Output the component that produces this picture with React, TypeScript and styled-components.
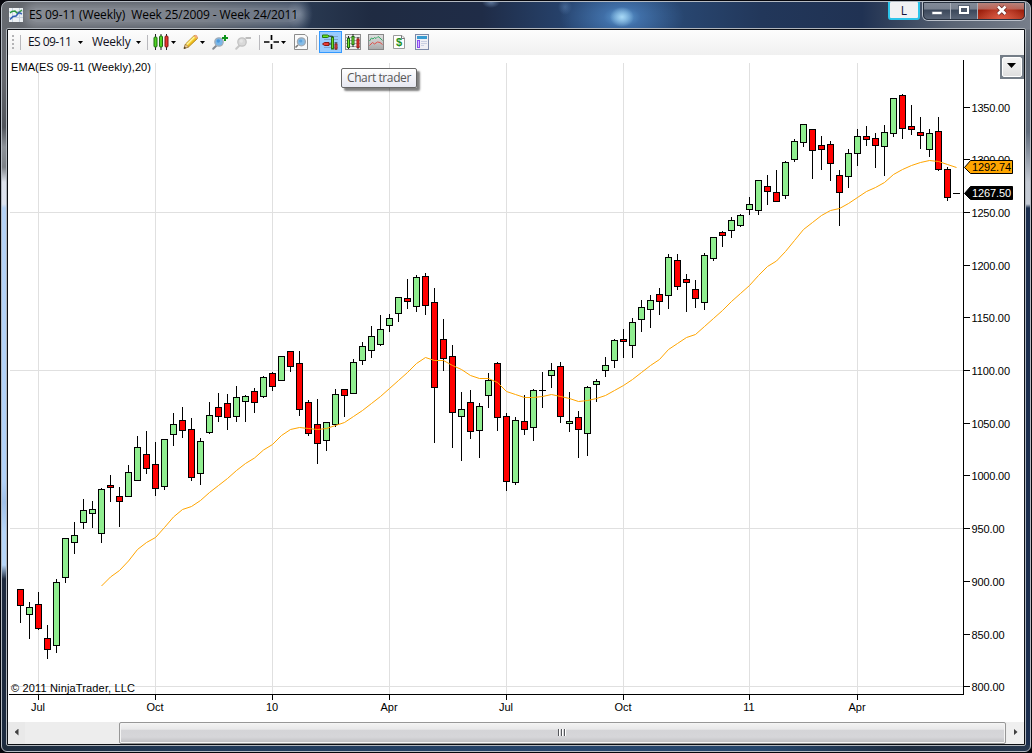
import React from "react";
import styled, { createGlobalStyle } from "styled-components";

const Global = createGlobalStyle`
  * { box-sizing: border-box; }
  body { margin: 0; background: #05070d; overflow: hidden; }
`;

const uiFont = `"Open Sans", "Noto Sans", sans-serif`;
const chartFont = `"Liberation Sans", Arial, sans-serif`;

const Desktop = styled.div`
  width: 1032px;
  height: 753px;
  padding: 1px;
  background: #05060c;
`;

const WindowFrame = styled.div`
  width: 1030px;
  height: 751px;
  border: 1px solid #b4bac2;
  border-radius: 7px 7px 6px 6px;
  display: flex;
  flex-direction: column;
  overflow: hidden;
  background:
    radial-gradient(ellipse 12px 10px at 620px 15px, rgba(175, 222, 248, 0.9) 0%, rgba(120, 180, 230, 0) 100%) no-repeat 0 0 / 100% 27px,
    radial-gradient(ellipse 62px 34px at 620px 15px, rgba(100, 165, 220, 0.95) 0%, rgba(74, 128, 190, 0.7) 30%, rgba(50, 90, 145, 0) 100%) no-repeat 0 0 / 100% 27px,
    radial-gradient(ellipse 13px 18px at 298px 12px, rgba(140, 155, 175, 0.5), rgba(90, 105, 130, 0)) no-repeat 0 0 / 100% 27px,
    radial-gradient(ellipse 9px 6px at 489px 0px, rgba(120, 150, 190, 0.7), rgba(60, 90, 130, 0)) no-repeat 0 0 / 100% 27px,
    radial-gradient(ellipse 7px 8px at 563px 5px, rgba(110, 150, 200, 0.4), rgba(60, 90, 130, 0)) no-repeat 0 0 / 100% 27px,
    linear-gradient(90deg, #666a70 0, #5c6067 60px, #4b525c 200px, #2a3a52 300px, #1f2b42 370px, #1f2c47 480px, #27446f 570px, #284670 680px, #22375a 760px, #203253 860px, #39475f 900px, #5a6474 950px, #777e8a 1028px) no-repeat 0 0 / 100% 27px,
    linear-gradient(180deg, #686c73 0, #64676d 80px, #50545b 125px, #8d9299 145px, #7d8288 165px, #dde2ec 180px, #dce3f0 202px, #b4d2f6 206px, #b2d2f8 480px, #9fc0e9 500px, #b6d6f9 530px, #b6d6f9 563px, #1d2a3e 577px, #1d2b40 100%) no-repeat 0 0 / 5px 743px,
    linear-gradient(180deg, #7d828b 0, #5c6673 60px, #5f6b7b 130px, #c3c9d3 180px, #c5ccd6 202px, #1b2e4e 206px, #1b2e4e 100%) no-repeat 100% 0 / 6px 743px,
    linear-gradient(90deg, #1d2a3a, #203856 18%, #26456c 55%, #25466c 74%, #1d2b3e 88%, #26374e);
`;

const TitleBar = styled.header`
  height: 26px;
  flex: none;
  display: flex;
  align-items: flex-start;
  padding-left: 7px;
`;

const TitleIcon = styled.svg`
  margin: 6px 6px 0 0;
  flex: none;
`;

const Title = styled.div`
  flex: 1;
  height: 26px;
  font: 12px/26px ${uiFont};
  letter-spacing: -0.09px;
  white-space: pre;
  color: #000;
  & > span {
    display: inline-block;
    line-height: 14px;
    border-radius: 8px;
    background: rgba(190, 196, 204, 0.42);
    box-shadow: 0 0 8px 5px rgba(190, 196, 204, 0.42);
  }
`;

const LanguageButton = styled.div`
  width: 32px;
  height: 20px;
  margin: -2px 2px 0 0;
  border: 2px solid #2cc4ea;
  border-radius: 3px;
  background: #f1f1f3;
  font: 12px/17px ${uiFont};
  color: #16163c;
  text-align: center;
`;

const Controls = styled.div`
  display: flex;
  height: 20px;
  margin: -1px 4px 0 0;
  border: 1px solid #b9bfc9;
  border-top: 0;
  border-radius: 0 0 6px 6px;
  overflow: hidden;
  outline: 1px solid #262f3d;
  outline-offset: -2px;
`;

const Control = styled.div<{ $w: number; $close?: boolean }>`
  width: ${(p) => p.$w}px;
  display: flex;
  justify-content: center;
  align-items: flex-start;
  padding-top: 1px;
  border-right: ${(p) => (p.$close ? "0" : "1px solid #aab0bb")};
  background: ${(p) =>
    p.$close
      ? "radial-gradient(ellipse at 50% 100%, #e0604a 0, rgba(200,50,30,0) 70%), linear-gradient(#b98c86 0, #b1645a 42%, #9c1e0c 48%, #b43a22 100%)"
      : "linear-gradient(#858d9b 0, #79818f 42%, #3c485b 48%, #5d687a 100%)"};
`;

const Client = styled.main`
  width: 1020px;
  height: 718px;
  flex: none;
  margin-left: 4px;
  border: 1px solid #b0b5bb;
  border-radius: 2px;
  padding: 1px;
  background: #0b0e13;
`;

const Surface = styled.div`
  position: relative;
  width: 1016px;
  height: 714px;
  display: flex;
  flex-direction: column;
  background: #fff;
`;

const Toolbar = styled.nav`
  height: 25px;
  flex: none;
  display: flex;
  align-items: flex-start;
  background: linear-gradient(#fdfdfd, #f0f0f0);
`;

const Grip = styled.div`
  width: 2px;
  height: 15px;
  margin: 5px 0 0 4px;
  background: repeating-linear-gradient(#b4b4b6 0 2px, transparent 2px 4px);
`;

const Separator = styled.div<{ $gap: number }>`
  width: 1px;
  height: 15px;
  margin: 5px 0 0 ${(p) => p.$gap}px;
  background: #b9b9bd;
`;

const Label = styled.div<{ $gap: number; $w: number; $track: number }>`
  width: ${(p) => p.$w}px;
  margin-left: ${(p) => p.$gap}px;
  font: 12px/24px ${uiFont};
  letter-spacing: ${(p) => p.$track}px;
  white-space: nowrap;
  color: #10101c;
`;

const Caret = styled.i<{ $gap: number }>`
  width: 5px;
  height: 3px;
  margin: 11px 0 0 ${(p) => p.$gap}px;
  background: #000;
  clip-path: polygon(0 0, 100% 0, 50% 100%);
`;

const IconSlot = styled.div<{ $gap: number; $active?: boolean }>`
  flex: none;
  width: ${(p) => (p.$active ? 23 : 16)}px;
  height: ${(p) => (p.$active ? 22 : 16)}px;
  margin: ${(p) => (p.$active ? 1 : 4)}px 0 0 ${(p) => p.$gap}px;
  padding: ${(p) => (p.$active ? "2px 0 0 2px" : "0")};
  border: ${(p) => (p.$active ? "1px solid #3399ff" : "0")};
  background: ${(p) => (p.$active ? "#99ccff" : "none")};
  svg { display: block; overflow: visible; }
`;

const ChartSvg = styled.svg`
  display: block;
  flex: none;
  font: 11px ${chartFont};
`;

const MenuButton = styled.div`
  position: absolute;
  top: 25px;
  right: 0;
  width: 24px;
  height: 24px;
  padding: 2px;
  background: #747d87;
  & > div {
    width: 20px;
    height: 20px;
    border: 1px solid #fff;
    border-radius: 2px;
    background: linear-gradient(#f4f4f4, #ebebeb 50%, #dedede);
    padding: 5px 0 0 4px;
  }
  i {
    display: block;
    width: 9px;
    height: 5px;
    background: #000;
    clip-path: polygon(0 0, 100% 0, 50% 100%);
  }
`;

const Tooltip = styled.div`
  position: absolute;
  left: 333px;
  top: 38px;
  width: 76px;
  height: 20px;
  border: 1px solid #676767;
  border-radius: 2px;
  background: linear-gradient(#fff, #e6e7f1);
  box-shadow: 3px 3px 2px rgba(0, 0, 0, 0.5);
  font: 12px/18px ${uiFont};
  letter-spacing: -0.4px;
  padding-left: 5px;
  white-space: nowrap;
  color: #575757;
`;

const ScrollBar = styled.div`
  height: 22px;
  flex: none;
  display: flex;
  background: #ededed;
`;

const ScrollArrow = styled.div<{ $right?: boolean }>`
  width: 17px;
  height: 22px;
  display: flex;
  align-items: center;
  justify-content: center;
  background: ${(p) => (p.$right ? "#efefef" : "#e9e9e9")};
  i {
    width: 4px;
    height: 7px;
    margin-top: -2px;
    background: #404040;
    clip-path: ${(p) => (p.$right ? "polygon(0 0, 100% 50%, 0 100%)" : "polygon(100% 0, 0 50%, 100% 100%)")};
  }
`;

const Thumb = styled.div`
  width: 887px;
  height: 22px;
  margin: 0 1px 0 94px;
  border: 1px solid #979797;
  border-radius: 2px;
  box-shadow: inset 0 0 0 1px #f4f4f4;
  background: linear-gradient(#f3f3f3 0, #e8e8e9 32%, #d4d4d7 34%, #d6d6d9 70%, #bebec1 100%);
  display: flex;
  justify-content: center;
  gap: 1px;
  padding: 6px 2px 0 0;
  i {
    width: 2px;
    height: 7px;
    background: linear-gradient(90deg, #55575c 50%, #fff 50%);
  }
`;

/* One weekly bar: high, body top, body bottom, low (pixel rows), rising? */
type Bar = [number, number, number, number, 0 | 1];

const bars: Bar[] = [
  [589, 589, 606, 623, 0], [602, 607, 615, 639, 1], [592, 604, 629, 630, 0], [625, 638, 650, 659, 0],
  [579, 582, 646, 653, 1], [538, 538, 578, 583, 1], [522, 535, 543, 554, 1], [499, 510, 523, 529, 1],
  [501, 509, 514, 528, 1], [488, 489, 534, 543, 1], [475, 485, 488, 502, 0], [487, 496, 502, 527, 0],
  [465, 472, 497, 497, 1], [436, 447, 481, 481, 1], [431, 454, 469, 474, 0], [442, 464, 489, 496, 0],
  [439, 439, 487, 490, 1], [413, 424, 435, 446, 1], [407, 420, 431, 438, 0], [418, 429, 478, 481, 0],
  [438, 441, 474, 485, 1], [402, 415, 433, 434, 1], [393, 407, 417, 422, 0], [394, 403, 418, 430, 0],
  [386, 397, 417, 422, 1], [395, 396, 402, 422, 1], [388, 391, 403, 413, 0], [376, 377, 397, 398, 1],
  [372, 373, 387, 391, 0], [356, 356, 381, 381, 1], [351, 351, 367, 372, 0], [351, 363, 410, 416, 0],
  [400, 402, 434, 436, 0], [399, 424, 444, 464, 0], [422, 422, 441, 451, 1], [389, 394, 425, 427, 1],
  [389, 389, 396, 417, 0], [359, 362, 394, 394, 1], [342, 346, 361, 365, 1], [326, 336, 351, 358, 1],
  [315, 329, 345, 346, 1], [314, 318, 326, 332, 1], [297, 297, 314, 322, 1], [279, 298, 302, 309, 0],
  [275, 277, 307, 312, 1], [273, 276, 306, 315, 0], [288, 302, 388, 443, 0], [319, 339, 359, 371, 0],
  [345, 356, 413, 448, 0], [392, 409, 417, 461, 1], [390, 402, 432, 439, 0], [403, 406, 431, 458, 1],
  [373, 380, 396, 408, 1], [362, 363, 418, 431, 0], [413, 416, 482, 491, 0], [417, 420, 483, 485, 1],
  [395, 421, 430, 435, 0], [389, 390, 428, 441, 1], [372, 390, 391, 408, 1], [363, 370, 376, 388, 1],
  [362, 366, 417, 423, 0], [392, 421, 424, 432, 1], [411, 417, 430, 458, 0], [386, 387, 434, 456, 1],
  [379, 381, 385, 402, 1], [357, 365, 371, 377, 1], [339, 340, 361, 368, 1], [329, 339, 342, 358, 0],
  [318, 322, 346, 358, 1], [300, 307, 320, 332, 1], [295, 300, 310, 328, 1], [288, 294, 302, 315, 0],
  [254, 257, 296, 309, 1], [254, 260, 287, 290, 0], [274, 279, 283, 312, 0], [280, 289, 299, 308, 0],
  [253, 255, 303, 310, 1], [237, 237, 259, 261, 1], [231, 232, 236, 247, 0], [217, 220, 231, 238, 1],
  [214, 215, 226, 227, 1], [197, 204, 210, 215, 1], [180, 180, 211, 215, 1], [175, 186, 192, 205, 0],
  [170, 192, 202, 202, 0], [161, 162, 196, 199, 1], [139, 141, 160, 162, 1], [124, 124, 143, 147, 1],
  [129, 129, 151, 179, 0], [136, 145, 150, 170, 0], [141, 144, 164, 181, 0], [170, 175, 193, 226, 0],
  [149, 153, 177, 188, 1], [129, 136, 154, 166, 1], [126, 136, 140, 146, 0], [133, 138, 146, 168, 0],
  [125, 132, 147, 176, 1], [98, 98, 134, 137, 1], [94, 95, 129, 139, 0], [105, 126, 130, 135, 0],
  [117, 132, 136, 149, 0], [129, 133, 150, 157, 1], [117, 131, 170, 171, 0], [167, 169, 198, 201, 0],
];

/* Moving average rows, starting at the tenth bar */
const ema = [
  586, 577, 570.5, 561, 549.5, 542.5, 537.5, 527.5, 517, 509.5, 506.5, 500.5, 492.5, 485.5, 478.5, 470.5,
  463.5, 458, 450, 444.5, 435.5, 429.5, 427.5, 428.5, 429.5, 428.5, 425.5, 422.5, 416.5, 410.5, 403.5, 396.5,
  388.5, 380.5, 372.5, 363.5, 357.5, 360.5, 360.5, 365.5, 369.5, 375.5, 378.5, 378.5, 382.5, 391.5, 394.5,
  397.5, 397.5, 396.5, 394.5, 396.5, 398.5, 401.5, 400.5, 398.5, 395.5, 390.5, 385.5, 379.5, 372.5, 365.5,
  359.5, 349.5, 343.5, 337.5, 334.5, 326.5, 318.5, 310.5, 301.5, 293.5, 285.5, 275.5, 266.5, 261, 251.5,
  240.5, 229.5, 222.5, 215.5, 210.5, 208.5, 203.5, 197.5, 191.5, 187.5, 182.5, 174.5, 169.5, 165.5, 162.5,
  160.5, 161.5, 164.5, 167.5,
];

const prices: [number, string][] = [
  [107, "1350.00"], [159, "1300.00"], [212, "1250.00"], [265, "1200.00"], [317, "1150.00"], [370, "1100.00"],
  [423, "1050.00"], [475, "1000.00"], [528, "950.00"], [581, "900.00"], [634, "850.00"], [686, "800.00"],
];

const months: [number, string][] = [
  [38, "Jul"], [155, "Oct"], [272, "10"], [389, "Apr"], [506, "Jul"], [623, "Oct"], [749, "11"], [857, "Apr"],
];

const barX = (i: number) => 20 + i * 9;

function Candle({ x, bar }: { x: number; bar: Bar }) {
  const [hi, top, bottom, lo, up] = bar;
  return (
    <g>
      <rect x={x} y={hi} width={1} height={lo - hi} fill="#000" />
      <rect x={x - 3} y={top} width={7} height={bottom - top} fill="#000" />
      {bottom - top > 2 && (
        <rect x={x - 2} y={top + 1} width={5} height={bottom - top - 2} fill={up ? "#90ee90" : "#ff0000"} />
      )}
    </g>
  );
}

function PriceTag({ y, text, fill, color }: { y: number; text: string; fill: string; color: string }) {
  return (
    <g>
      <path d={`M964.5 ${y + 0.5} L970.5 ${y - 6.5} H1012.5 V${y + 6.5} H970.5 Z`} fill={fill} stroke="#000" />
      <text x={972} y={y + 4} textLength={39} fill={color}>{text}</text>
    </g>
  );
}

function Chart() {
  return (
    <ChartSvg width={1016} height={667} viewBox="8 55 1016 667">
      <g fill="#e0e0e0">
        {[212, 370, 528, 686].map((y) => <rect key={y} x={10} y={y} width={953} height={1} />)}
        {months.map(([x]) => <rect key={x} x={x} y={63} width={1} height={631} />)}
      </g>
      {bars.map((bar, i) => <Candle key={i} x={barX(i)} bar={bar} />)}
      <rect x={953} y={193} width={7} height={1} fill="#000" />
      <polyline
        points={ema.map((y, i) => `${barX(i + 9) + 0.5},${y}`).join(" ")}
        fill="none"
        stroke="#ffa500"
        strokeWidth={1}
      />
      <rect x={963} y={60} width={1} height={635} fill="#000" />
      <rect x={9} y={694} width={955} height={1} fill="#000" />
      {prices.map(([y, text]) => (
        <g key={text}>
          <rect x={964} y={y} width={6} height={1} fill="#000" />
          <text x={971.5} y={y + 5} textLength={text.length === 7 ? 38.5 : 33}>{text}</text>
        </g>
      ))}
      {months.map(([x, text]) => (
        <g key={x}>
          <rect x={x} y={695} width={1} height={5} fill="#000" />
          <text x={x} y={711} textAnchor="middle">{text}</text>
        </g>
      ))}
      <text x={11} y={71} textLength={140}>EMA(ES 09-11 (Weekly),20)</text>
      <text x={11} y={692} textLength={124}>© 2011 NinjaTrader, LLC</text>
      <PriceTag y={167} text="1292.74" fill="#ffa500" color="#000" />
      <PriceTag y={193} text="1267.50" fill="#000" color="#fff" />
    </ChartSvg>
  );
}

const Icon = ({ children }: { children: React.ReactNode }) => (
  <svg width={16} height={16} viewBox="0 0 16 16">{children}</svg>
);

const ChartStyleIcon = () => (
  <Icon>
    <path d="M2.5 0V16M8 0V16M13.5 0V16" stroke="#222" />
    <rect x="1" y="3" width="3" height="10" rx="1" fill="#4ed321" stroke="#1d6b10" />
    <rect x="6.5" y="2" width="3" height="11" rx="1" fill="#4ed321" stroke="#1d6b10" />
    <rect x="12" y="2" width="3" height="11" rx="1" fill="#e8372f" stroke="#7d1410" />
  </Icon>
);

const PencilIcon = () => (
  <Icon>
    <path d="M1 14.5 2.5 10 11 1.7Q12 .8 13.2 2L14 2.8Q15 4 14 5L5.5 13Z" fill="#f7d22e" stroke="#a87d10" strokeWidth=".8" />
    <path d="M3.5 10.8 11.3 3" stroke="#fff3a0" strokeWidth="1.4" />
    <path d="M5 12.5 13 4.7" stroke="#dd9d18" />
    <path d="M1 14.5 2.5 10 5.5 13Z" fill="#eecb9a" stroke="#8a6a3a" strokeWidth=".6" />
    <path d="M1 14.8 1.6 12.8 3 14Z" fill="#222" />
    <path d="M11 2 12 1Q13 .5 14 1.5T14.5 4L13.8 4.8Z" fill="#f0a880" />
  </Icon>
);

const MagnifierIcon = ({ muted, sign }: { muted?: boolean; sign: "plus" | "minus" }) => (
  <Icon>
    <path d="M4.5 11.5 1.2 14.8" stroke={muted ? "#c6c6c6" : "#858b92"} strokeWidth="2" strokeLinecap="round" />
    <circle cx="7" cy="8" r="4.2" fill={muted ? "#d9d9d9" : "#79b7e8"} stroke={muted ? "#c2c2c2" : "#a3adb8"} strokeWidth="1.3" />
    <circle cx="6.3" cy="7" r="1.7" fill={muted ? "#e6e6e6" : "#4c98dc"} />
    {sign === "plus" ? (
      <path d="M13 1V7M10 4H16" stroke="#10941c" strokeWidth="2" />
    ) : (
      <path d="M10.5 4H16" stroke="#bdbdbd" strokeWidth="2" />
    )}
  </Icon>
);

const CrosshairIcon = () => (
  <Icon>
    <path d="M0 8H5.5M9.5 8H15M7.5 1V6M7.5 10V15" stroke="#000" strokeWidth="1.7" />
  </Icon>
);

const DataBoxIcon = () => (
  <Icon>
    <path d="M1.5 .5H12L14.5 3V15.5H1.5Z" fill="#fafafa" stroke="#8c8c8c" />
    <path d="M5 11 2.5 13.5" stroke="#777" strokeWidth="1.6" />
    <circle cx="8.4" cy="7.8" r="4" fill="#86bce6" stroke="#a1a8b1" strokeWidth="1.3" />
    <circle cx="7.7" cy="7" r="1.6" fill="#5ba2dd" />
  </Icon>
);

const ChartTraderIcon = () => (
  <Icon>
    <path d="M8 2.5H16M2 5.5H16M8 8.5H16M2 13.5H16" stroke="#7fa6cf" />
    <path d="M.5 1H5.5L7.5 2.2 5.5 3.5H.5Z" fill="#6be020" stroke="#23780f" />
    <path d="M.5 10 2.5 8.5H7V11.5H2.5Z" fill="#e83c35" stroke="#861915" />
    <path d="M7.5 2.2H10.5V3M7 10H9.5" fill="none" stroke="#222" />
    <rect x="9.5" y="3" width="2" height="12" fill="#69dc28" stroke="#287413" />
    <path d="M14 8V16" stroke="#222" />
    <rect x="13" y="10" width="2" height="5" fill="#e5534d" stroke="#8f211c" />
  </Icon>
);

const BarsIcon = () => (
  <Icon>
    <rect x=".5" y=".5" width="15" height="15" fill="#eee" stroke="#8e8e8e" />
    <path d="M1 3.5H15M1 6.5H15M1 9.5H15M1 12.5H15" stroke="#a8a8a8" />
    <path d="M3.5 2V15M8 0V13M13 3V15" stroke="#222" />
    <rect x="2.5" y="4.5" width="2" height="9" fill="#7fe832" stroke="#1d6b10" />
    <rect x="7" y="2.5" width="2" height="8" fill="#7fe832" stroke="#1d6b10" />
    <rect x="12" y="5" width="2" height="8.5" fill="#e8372f" stroke="#9d1a14" />
  </Icon>
);

const IndicatorIcon = () => (
  <Icon>
    <defs>
      <linearGradient id="panelShade" x1="0" x2="0" y1="0" y2="1">
        <stop offset="0" stopColor="#e2e2e2" />
        <stop offset="1" stopColor="#a9a9a9" />
      </linearGradient>
    </defs>
    <rect x=".5" y=".5" width="15" height="15" fill="url(#panelShade)" stroke="#888" />
    <path d="M1.5 7 3.5 4 5 5 6.5 3.5 8 4.5 10 2.5 12 4 14.5 6.5" fill="none" stroke="#35aa66" />
    <path d="M1.5 11.5 4.5 8.5 6.5 10 9.5 8 12 8.5 14.5 10.5" fill="none" stroke="#e0504a" />
  </Icon>
);

const StrategyIcon = () => (
  <Icon>
    <path d="M2.5 1.5H11L13.5 4V14.5H2.5Z" fill="#fff" stroke="#9b9b9b" />
    <path d="M10.5 1.5V4.5H13.5" fill="none" stroke="#777" />
    <text x="8" y="12" textAnchor="middle" fontFamily="Liberation Sans" fontWeight="700" fontSize="11" fill="#1d8f22">$</text>
  </Icon>
);

const PropertiesIcon = () => (
  <Icon>
    <rect x="1.5" y=".5" width="13" height="15" fill="#f0f0f4" stroke="#7d8aa8" />
    <rect x="3" y="2" width="10" height="3" fill="#389bd1" />
    <rect x="3.5" y="6.5" width="2" height="7" fill="#d9bcff" stroke="#8a4df0" />
    <path d="M7 7.5H13M7 9.5H13M7 11.5H10" stroke="#c9cfe2" />
  </Icon>
);

export default function App() {
  return (
    <Desktop>
      <Global />
      <WindowFrame>
        <TitleBar>
          <TitleIcon width={14} height={14} viewBox="0 0 14 14">
            <rect width="14" height="14" fill="#eef2f5" />
            <path d="M0 3.5H14M0 9.5H14M3.5 0V14M10.5 0V14" stroke="#c6d2df" />
            <path d="M1 5 3 3.5 6 3 8.5 5.5 13 2" fill="none" stroke="#2a9840" strokeWidth="1.4" />
            <path d="M1 11.5 4 8.5 7 8 10 4.5 13 6" fill="none" stroke="#315fb4" strokeWidth="1.6" />
          </TitleIcon>
          <Title><span>ES 09-11 (Weekly)  Week 25/2009 - Week 24/2011</span></Title>
          <LanguageButton>L</LanguageButton>
          <Controls>
            <Control $w={28}>
              <svg width={12} height={18}><rect x="1" y="9.5" width="10" height="3" fill="#fff" stroke="#596273" strokeWidth=".7" /></svg>
            </Control>
            <Control $w={27}>
              <svg width={12} height={18}><rect x="2" y="5" width="8" height="6" fill="#4b5668" stroke="#fff" strokeWidth="2" /><rect x=".6" y="3.6" width="10.8" height="8.8" fill="none" stroke="#4b5668" strokeWidth=".7" /></svg>
            </Control>
            <Control $w={47} $close>
              <svg width={14} height={18}><path d="M3 4.5 10.5 12M10.5 4.5 3 12" stroke="#6a2a28" strokeWidth="4.2" /><path d="M3 4.5 10.5 12M10.5 4.5 3 12" stroke="#fff" strokeWidth="2.6" /></svg>
            </Control>
          </Controls>
        </TitleBar>
        <Client>
          <Surface>
            <Toolbar>
              <Grip />
              <Separator $gap={6} />
              <Label $gap={7} $w={44} $track={-0.55}>ES 09-11</Label>
              <Caret $gap={6} />
              <Label $gap={9} $w={39} $track={-0.25}>Weekly</Label>
              <Caret $gap={5} />
              <Separator $gap={6} />
              <IconSlot $gap={5}><ChartStyleIcon /></IconSlot>
              <Caret $gap={2} />
              <IconSlot $gap={7}><PencilIcon /></IconSlot>
              <Caret $gap={1} />
              <IconSlot $gap={7}><MagnifierIcon sign="plus" /></IconSlot>
              <IconSlot $gap={7}><MagnifierIcon sign="minus" muted /></IconSlot>
              <Separator $gap={8} />
              <IconSlot $gap={4}><CrosshairIcon /></IconSlot>
              <Caret $gap={1} />
              <IconSlot $gap={7}><DataBoxIcon /></IconSlot>
              <Separator $gap={7} />
              <IconSlot $gap={2} $active><ChartTraderIcon /></IconSlot>
              <IconSlot $gap={3}><BarsIcon /></IconSlot>
              <IconSlot $gap={7}><IndicatorIcon /></IconSlot>
              <IconSlot $gap={7}><StrategyIcon /></IconSlot>
              <IconSlot $gap={7}><PropertiesIcon /></IconSlot>
            </Toolbar>
            <Chart />
            <ScrollBar>
              <ScrollArrow><i /></ScrollArrow>
              <Thumb><i /><i /><i /></Thumb>
              <ScrollArrow $right><i /></ScrollArrow>
            </ScrollBar>
            <MenuButton><div><i /></div></MenuButton>
            <Tooltip>Chart trader</Tooltip>
          </Surface>
        </Client>
      </WindowFrame>
    </Desktop>
  );
}
